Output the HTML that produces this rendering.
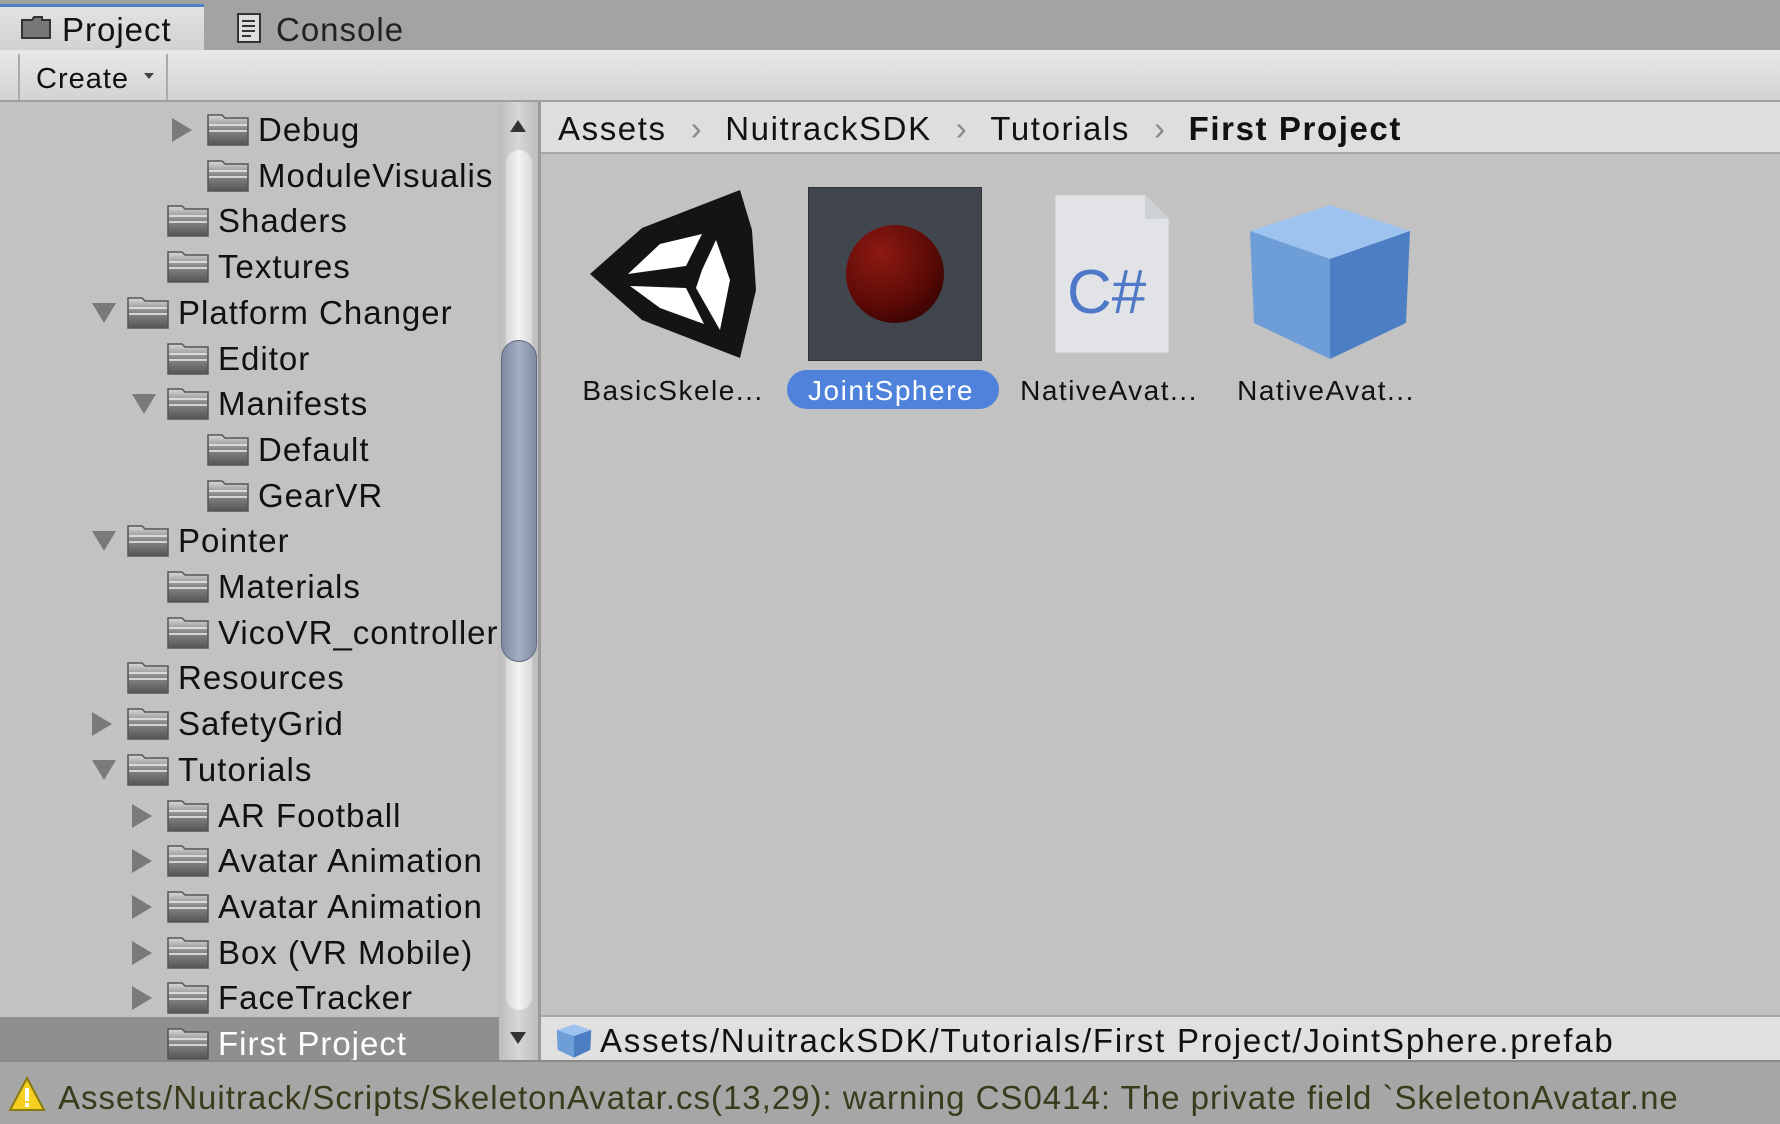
<!DOCTYPE html>
<html><head><meta charset="utf-8"><style>
*{margin:0;padding:0;box-sizing:border-box}
body{width:1780px;height:1124px;overflow:hidden;background:#c2c2c2;font-family:"Liberation Sans","DejaVu Sans",sans-serif;position:relative;color:#111}
.a{position:absolute}
.row{position:absolute;height:46px;line-height:46px;font-size:33px;letter-spacing:1px;white-space:nowrap}
.fold{position:absolute;width:44px;height:36px}
.tri{position:absolute;width:0;height:0}
.r{border-top:12px solid transparent;border-bottom:12px solid transparent;border-left:20px solid #7a7a7a}
.d{border-left:12px solid transparent;border-right:12px solid transparent;border-top:20px solid #7a7a7a}
</style></head><body>
<div class="a" style="left:0;top:0;width:1780px;height:50px;background:#a3a3a3"></div>
<div class="a" style="left:0;top:4px;width:204px;height:46px;background:linear-gradient(#e2e2e2,#d2d2d2);border-top:3px solid #4f7fc4"></div>
<svg class="a" style="left:20px;top:14px" width="32" height="26"><path d="M2 6h10l2-3h8v3h8v18H2z" fill="#777" stroke="#333" stroke-width="2"/></svg>
<div class="a" style="left:62px;top:8px;font-size:33px;letter-spacing:1px;line-height:44px">Project</div>
<svg class="a" style="left:236px;top:12px" width="26" height="32"><rect x="2" y="2" width="22" height="28" fill="#ddd" stroke="#333" stroke-width="2"/><path d="M6 9h13M6 14h13M6 19h13M6 24h9" stroke="#333" stroke-width="2"/></svg>
<div class="a" style="left:276px;top:8px;font-size:33px;letter-spacing:1px;line-height:44px;color:#222">Console</div>
<div class="a" style="left:0;top:50px;width:1780px;height:52px;background:linear-gradient(#e9e9e9,#d3d3d3);border-bottom:2px solid #a0a0a0"></div>
<div class="a" style="left:18px;top:54px;width:150px;height:46px;border-left:2px solid #aaa;border-right:2px solid #aaa"></div>
<div class="a" style="left:36px;top:57px;font-size:29px;letter-spacing:1px;line-height:44px">Create</div>
<div class="a" style="left:144px;top:73px;border-left:5px solid transparent;border-right:5px solid transparent;border-top:6px solid #444"></div>
<div class="a" style="left:0;top:102px;width:500px;height:958px;background:#c2c2c2"></div>
<div class="a" style="left:0;top:1017px;width:500px;height:43px;background:#8f8f8f"></div>
<svg width="0" height="0" style="position:absolute"><defs><linearGradient id="fg" x1="0" y1="0" x2="0" y2="1"><stop offset="0" stop-color="#d8d8d8"/><stop offset=".45" stop-color="#8a8a8a"/><stop offset="1" stop-color="#555"/></linearGradient>
<symbol id="F" viewBox="0 0 44 36"><path d="M2 4h14l3 3h23v27H2z" fill="url(#fg)" stroke="#555" stroke-width="1.5"/><path d="M3 14h38M3 20h38" stroke="#eee" stroke-width="1.5"/></symbol></defs></svg>
<div id="tree"></div>
<script>
var rows=[[2,'r','Debug'],[2,'','ModuleVisualis'],[1,'','Shaders'],[1,'','Textures'],[0,'d','Platform Changer'],[1,'','Editor'],[1,'d','Manifests'],[2,'','Default'],[2,'','GearVR'],[0,'d','Pointer'],[1,'','Materials'],[1,'','VicoVR_controller'],[0,'','Resources'],[0,'r','SafetyGrid'],[0,'d','Tutorials'],[1,'r','AR Football'],[1,'r','Avatar Animation'],[1,'r','Avatar Animation'],[1,'r','Box (VR Mobile)'],[1,'r','FaceTracker'],[1,'','First Project']];
var h='';rows.forEach(function(r,i){var c=130+i*45.7;var lv=r[0];var fx=126+lv*40;var tx=178+lv*40;
if(r[1]=='r')h+='<div class="tri r" style="left:'+(fx-34)+'px;top:'+(c-12)+'px"></div>';
if(r[1]=='d')h+='<div class="tri d" style="left:'+(fx-34)+'px;top:'+(c-10)+'px"></div>';
h+='<svg class="fold" style="left:'+fx+'px;top:'+(c-19)+'px"><use href="#F"/></svg>';
h+='<div class="row" style="left:'+tx+'px;top:'+(c-23)+'px;'+(i==20?'color:#fff':'')+'">'+r[2]+'</div>';});
document.getElementById('tree').innerHTML=h;
</script>
<div class="a" style="left:499px;top:102px;width:39px;height:958px;background:linear-gradient(90deg,#bdbdbd,#d6d6d6,#bdbdbd)"></div>
<div class="a" style="left:506px;top:150px;width:26px;height:860px;border-radius:13px;background:linear-gradient(90deg,#d9d9d9,#f3f3f3,#d9d9d9)"></div>
<div class="a" style="left:501px;top:340px;width:36px;height:322px;border-radius:18px;background:linear-gradient(90deg,#7c89a0,#a4afc2,#7f8ba2);border:1px solid #5e6a80"></div>
<div class="a" style="left:510px;top:120px;border-left:8px solid transparent;border-right:8px solid transparent;border-bottom:12px solid #333"></div>
<div class="a" style="left:510px;top:1032px;border-left:8px solid transparent;border-right:8px solid transparent;border-top:12px solid #333"></div>
<div class="a" style="left:538px;top:102px;width:3px;height:958px;background:#9a9a9a"></div>
<div class="a" style="left:541px;top:102px;width:1239px;height:52px;background:#dedede;border-bottom:2px solid #a8a8a8"></div>
<div class="a" style="left:558px;top:105px;font-size:33px;letter-spacing:1.6px;line-height:48px;white-space:nowrap;color:#111">Assets<span style="color:#888;margin:0 22px 0 24px">&#x203A;</span>NuitrackSDK<span style="color:#888;margin:0 22px 0 24px">&#x203A;</span>Tutorials<span style="color:#888;margin:0 22px 0 24px">&#x203A;</span><b>First Project</b></div>
<svg class="a" style="left:590px;top:190px" width="166" height="168" viewBox="0 0 166 168"><path d="M0 84 L52 38 L150 0 L162 40 L166 100 L150 168 L52 130 Z" fill="#141414"/><path d="M38 84 L70 54 L112 44 L96 76 Z" fill="#fff"/><path d="M126 50 L140 90 L130 140 L106 98 L112 80 Z" fill="#fff"/><path d="M40 96 L96 98 L114 134 L70 118 Z" fill="#fff"/></svg>
<div class="a" style="left:808px;top:187px;width:174px;height:174px;background:#41454d;border:1px solid #333"></div>
<div class="a" style="left:846px;top:225px;width:98px;height:98px;border-radius:50%;background:radial-gradient(circle at 35% 30%,#8d1a12,#5c0a06 55%,#1e0000)"></div>
<svg class="a" style="left:1053px;top:193px" width="118" height="162"><path d="M2 2h90l24 24v134H2z" fill="#e1e3e6" stroke="#c8c8c8"/><path d="M92 2v24h24" fill="#cfd2d6"/><text x="14" y="120" font-family="Liberation Sans,sans-serif" font-size="62" fill="#4f78c8">C#</text></svg>
<svg class="a" style="left:1248px;top:203px" width="164" height="158" viewBox="0 0 164 158"><path d="M82 2 L162 28 L82 56 L2 28 Z" fill="#9ec3ee"/><path d="M2 28 L82 56 L82 156 L6 120 Z" fill="#6d9ed8"/><path d="M162 28 L82 56 L82 156 L158 120 Z" fill="#4c7ec4"/></svg>
<div class="a" style="left:787px;top:370px;width:212px;height:39px;border-radius:20px;background:#4f82da"></div>
<div class="a" style="left:560px;top:371px;width:1200px;font-size:28px;letter-spacing:1.5px;line-height:40px;white-space:nowrap">
<span class="a" style="left:0;width:226px;text-align:center">BasicSkele...</span>
<span class="a" style="left:227px;width:208px;text-align:center;color:#fff">JointSphere</span>
<span class="a" style="left:449px;width:200px;text-align:center">NativeAvat...</span>
<span class="a" style="left:666px;width:200px;text-align:center">NativeAvat...</span></div>
<div class="a" style="left:541px;top:1015px;width:1239px;height:45px;background:#e0e0e0;border-top:2px solid #a8a8a8"></div>
<svg class="a" style="left:556px;top:1024px" width="36" height="34" viewBox="0 0 164 158"><path d="M82 2 L162 28 L82 56 L2 28 Z" fill="#9ec3ee"/><path d="M2 28 L82 56 L82 156 L6 120 Z" fill="#6d9ed8"/><path d="M162 28 L82 56 L82 156 L158 120 Z" fill="#4c7ec4"/></svg>
<div class="a" style="left:600px;top:1019px;font-size:33px;letter-spacing:1.8px;line-height:44px;white-space:nowrap">Assets/NuitrackSDK/Tutorials/First Project/JointSphere.prefab</div>
<div class="a" style="left:0;top:1060px;width:1780px;height:64px;background:#a6a6a6;border-top:2px solid #8a8a8a"></div>
<svg class="a" style="left:8px;top:1076px" width="38" height="36"><path d="M19 2 L36 34 H2 Z" fill="#f5d020" stroke="#8a7a10" stroke-width="2"/><rect x="17" y="12" width="4" height="13" fill="#fff"/><rect x="17" y="27" width="4" height="4" fill="#fff"/></svg>
<div class="a" style="left:58px;top:1076px;font-size:33px;letter-spacing:1px;line-height:44px;white-space:nowrap;color:#3a3a1c">Assets/Nuitrack/Scripts/SkeletonAvatar.cs(13,29): warning CS0414: The private field `SkeletonAvatar.ne</div>
</body></html>
